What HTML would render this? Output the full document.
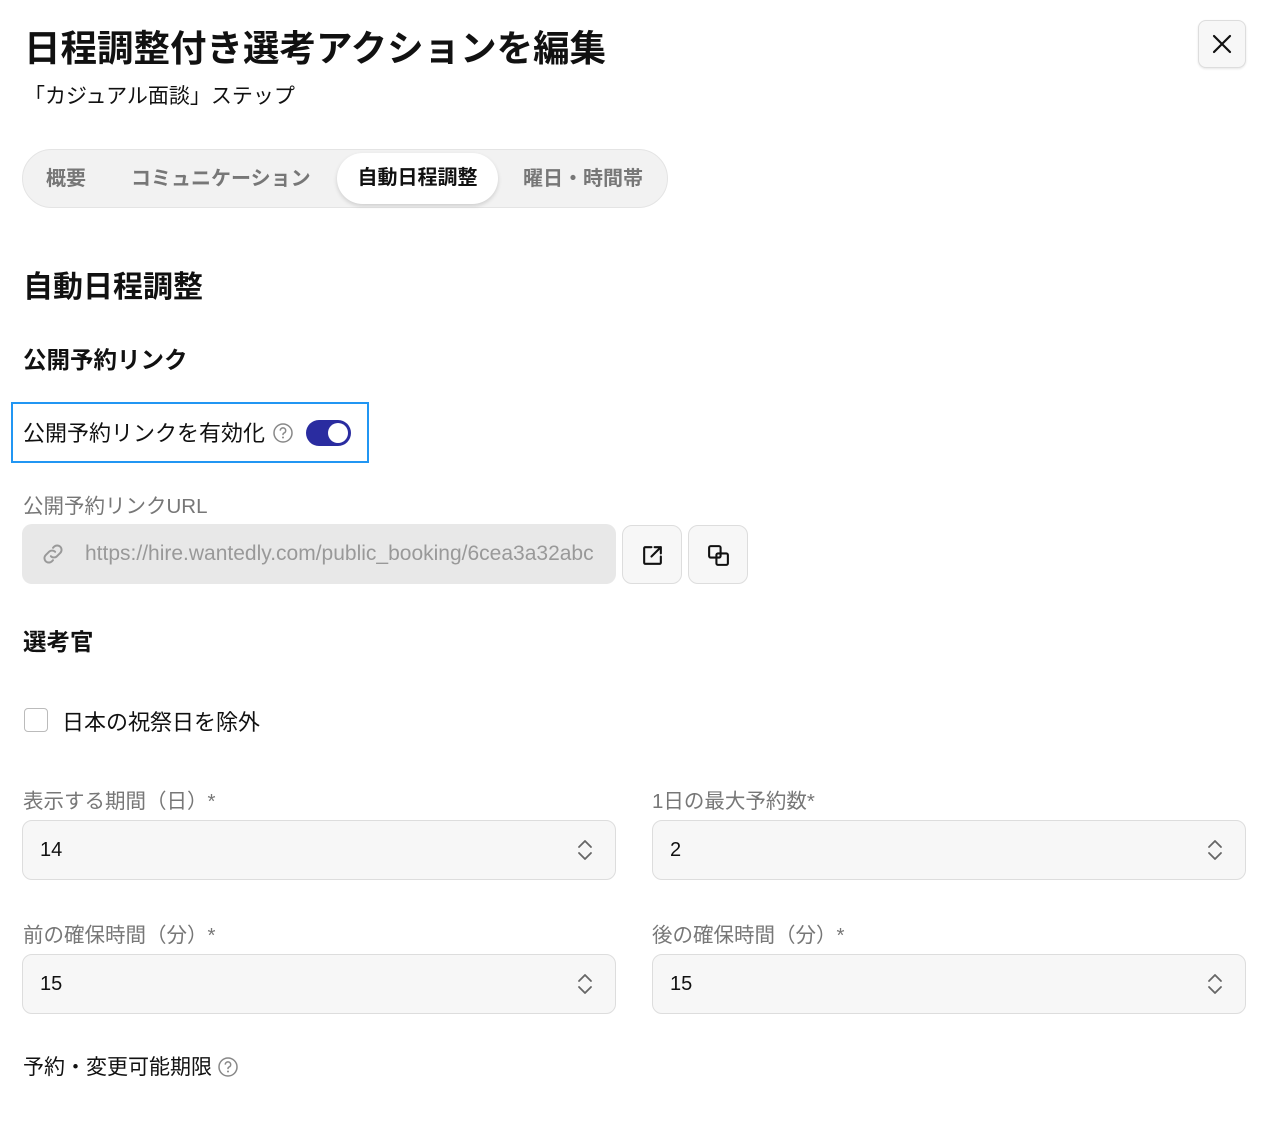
<!DOCTYPE html><html><head><meta charset="utf-8"><style>
body{margin:0;width:1272px;height:1140px;background:#fff;font-family:"Liberation Sans","Noto Sans CJK JP",sans-serif;color:#111;position:relative;overflow:hidden}
.a{position:absolute;white-space:nowrap}
.tabs{position:absolute;left:22px;top:149px;width:644px;height:57px;border:1px solid #e4e4e4;background:#f2f2f2;border-radius:30px}
.tab{position:absolute;top:0;height:57px;line-height:57px;font-size:20px;font-weight:bold;color:#777}
.act{position:absolute;left:314px;top:3px;width:161px;height:51px;background:#fff;border-radius:26px;box-shadow:0 2px 4px rgba(0,0,0,.15);text-align:center;line-height:51px;font-size:20px;font-weight:bold;color:#111}
.lbl{font-size:20.5px;color:#777}
.inp{position:absolute;height:60px;border:1px solid #ddd;border-radius:10px;background:#f7f7f7;font-size:20px;line-height:58px;box-sizing:border-box;padding-left:17px}
.btn{position:absolute;top:525px;width:60px;height:59px;border:1px solid #ddd;border-radius:10px;background:#f7f7f7;box-sizing:border-box}
</style></head><body>
<div class="a" style="left:24px;top:19px;font-size:36.5px;font-weight:bold">日程調整付き選考アクションを編集</div>
<div class="a" style="left:24px;top:80px;font-size:21px">「カジュアル面談」ステップ</div>
<div class="a" style="left:1198px;top:20px;width:46px;height:46px;border:1px solid #ddd;border-radius:8px;background:#f7f7f7;box-shadow:0 1px 2px rgba(0,0,0,.1)"><svg width="46" height="46" viewBox="0 0 46 46"><path d="M15 15L31 31M31 15L15 31" stroke="#111" stroke-width="2.2" stroke-linecap="round"/></svg></div>
<div class="tabs">
<div class="tab" style="left:23px;top:1px">概要</div>
<div class="tab" style="left:108px;top:1px">コミュニケーション</div>
<div class="act">自動日程調整</div>
<div class="tab" style="left:500px;top:1px">曜日・時間帯</div>
</div>
<div class="a" style="left:23px;top:262px;font-size:30px;font-weight:bold">自動日程調整</div>
<div class="a" style="left:23px;top:341px;font-size:23.5px;font-weight:bold">公開予約リンク</div>
<div class="a" style="left:11px;top:402px;width:354px;height:57px;border:2px solid #2196f3"></div>
<div class="a" style="left:23px;top:416px;font-size:22px">公開予約リンクを有効化</div>
<svg class="a" style="left:272px;top:422px" width="22" height="22" viewBox="0 0 22 22"><circle cx="11" cy="11" r="9" fill="none" stroke="#888" stroke-width="1.5"/><path d="M8.3 8.6a2.7 2.7 0 1 1 3.6 2.5c-.6.3-.9.7-.9 1.4v.6" fill="none" stroke="#888" stroke-width="1.5"/><circle cx="11" cy="15.5" r="1" fill="#888"/></svg>
<div class="a" style="left:306px;top:420px;width:45px;height:26px;border-radius:13px;background:#2a2ca0"><div style="position:absolute;right:3px;top:3px;width:20px;height:20px;border-radius:50%;background:#fff"></div></div>
<div class="a lbl" style="left:23px;top:489px">公開予約リンクURL</div>
<div class="a" style="left:22px;top:524px;width:594px;height:60px;border-radius:10px;background:#e8e8e8;overflow:hidden">
<svg style="position:absolute;left:18px;top:17px" width="26" height="26" viewBox="0 0 24 24" fill="none" stroke="#999" stroke-width="1.8" stroke-linecap="round"><path d="M10 14a4 4 0 0 0 5.7 0l3-3a4 4 0 0 0-5.7-5.7l-1 1"/><path d="M14 10a4 4 0 0 0-5.7 0l-3 3a4 4 0 0 0 5.7 5.7l1-1"/></svg>
<div style="position:absolute;left:63px;top:0;width:514px;overflow:hidden;line-height:60px;font-size:21px;color:#999">https://hire.wantedly.com/public_booking/6cea3a32abc</div></div>
<div class="btn" style="left:622px"><svg style="position:absolute;left:17px;top:17px" width="25" height="25" viewBox="0 0 24 24" fill="none" stroke="#111" stroke-width="2" stroke-linecap="round" stroke-linejoin="round"><path d="M11 4H5a1 1 0 0 0-1 1v14a1 1 0 0 0 1 1h14a1 1 0 0 0 1-1v-6"/><path d="M14 4h6v6M20 4l-9 9"/></svg></div>
<div class="btn" style="left:688px"><svg style="position:absolute;left:17px;top:17px" width="25" height="25" viewBox="0 0 24 24" fill="none" stroke="#111" stroke-width="2" stroke-linejoin="round"><rect x="3" y="3" width="11" height="11" rx="1.5"/><rect x="10" y="10" width="11" height="11" rx="1.5"/></svg></div>
<div class="a" style="left:23px;top:623px;font-size:23.5px;font-weight:bold">選考官</div>
<div class="a" style="left:24px;top:708px;width:22px;height:22px;border:1.5px solid #bbb;border-radius:4px"></div>
<div class="a" style="left:62px;top:705px;font-size:22px">日本の祝祭日を除外</div>
<div class="a lbl" style="left:23px;top:784px">表示する期間（日）*</div>
<div class="a lbl" style="left:652px;top:784px">1日の最大予約数*</div>
<div class="inp" style="left:22px;top:820px;width:594px">14</div>
<div class="inp" style="left:652px;top:820px;width:594px">2</div>
<div class="a lbl" style="left:23px;top:918px">前の確保時間（分）*</div>
<div class="a lbl" style="left:652px;top:918px">後の確保時間（分）*</div>
<div class="inp" style="left:22px;top:954px;width:594px">15</div>
<div class="inp" style="left:652px;top:954px;width:594px">15</div>
<svg class="a" style="left:574px;top:837px" width="22" height="26" viewBox="0 0 22 26" fill="none" stroke="#666" stroke-width="1.8" stroke-linecap="round" stroke-linejoin="round"><path d="M5 10l6-6 6 6M5 16l6 6 6-6"/></svg>
<svg class="a" style="left:1204px;top:837px" width="22" height="26" viewBox="0 0 22 26" fill="none" stroke="#666" stroke-width="1.8" stroke-linecap="round" stroke-linejoin="round"><path d="M5 10l6-6 6 6M5 16l6 6 6-6"/></svg>
<svg class="a" style="left:574px;top:971px" width="22" height="26" viewBox="0 0 22 26" fill="none" stroke="#666" stroke-width="1.8" stroke-linecap="round" stroke-linejoin="round"><path d="M5 10l6-6 6 6M5 16l6 6 6-6"/></svg>
<svg class="a" style="left:1204px;top:971px" width="22" height="26" viewBox="0 0 22 26" fill="none" stroke="#666" stroke-width="1.8" stroke-linecap="round" stroke-linejoin="round"><path d="M5 10l6-6 6 6M5 16l6 6 6-6"/></svg>
<div class="a" style="left:23px;top:1051px;font-size:21px">予約・変更可能期限</div>
<svg class="a" style="left:217px;top:1056px" width="22" height="22" viewBox="0 0 22 22"><circle cx="11" cy="11" r="9" fill="none" stroke="#888" stroke-width="1.5"/><path d="M8.3 8.6a2.7 2.7 0 1 1 3.6 2.5c-.6.3-.9.7-.9 1.4v.6" fill="none" stroke="#888" stroke-width="1.5"/><circle cx="11" cy="15.5" r="1" fill="#888"/></svg>
</body></html>
